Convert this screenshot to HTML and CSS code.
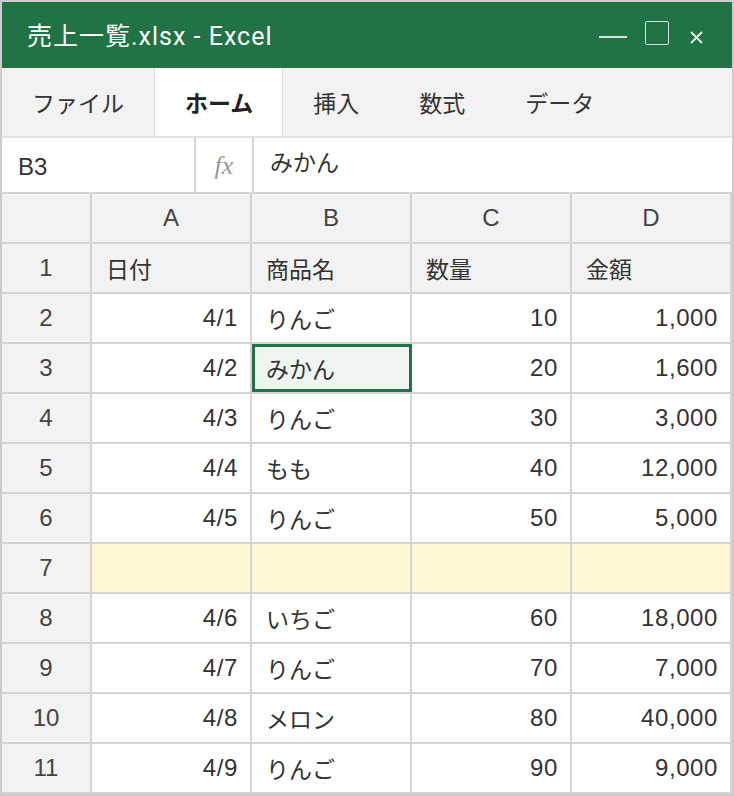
FILE: index.html
```html
<!DOCTYPE html>
<html lang="ja">

<head>
    <meta charset="UTF-8">
    <meta name="viewport" content="width=device-width, initial-scale=1.0">
    <title>売上一覧.xlsx - Excel</title>
    <link rel="stylesheet" href="styles.css">
</head>

<body>
    <div class="window">
        <div class="titlebar">
            <span class="title">売上一覧.xlsx - Excel</span>
            <div class="controls">
                <span class="ctl-min"></span>
                <span class="ctl-max"></span>
                <svg class="ctl-close" width="13" height="13" viewBox="0 0 13 13">
                    <path d="M1 1 L12 12 M12 1 L1 12" stroke="#e6ece8" stroke-width="1.8" fill="none" />
                </svg>
            </div>
        </div>

        <div class="tabs">
            <div class="tab">ファイル</div>
            <div class="tab active">ホーム</div>
            <div class="tab">挿入</div>
            <div class="tab">数式</div>
            <div class="tab">データ</div>
        </div>

        <div class="formula-bar">
            <div class="name-box">B3</div>
            <div class="fx">fx</div>
            <div class="formula">みかん</div>
        </div>

        <div class="sheet">
            <div class="hd corner"></div>
            <div class="hd col">A</div>
            <div class="hd col">B</div>
            <div class="hd col">C</div>
            <div class="hd col">D</div>

            <div class="hd row">1</div>
            <div class="cell label">日付</div>
            <div class="cell label">商品名</div>
            <div class="cell label">数量</div>
            <div class="cell label">金額</div>

            <div class="hd row">2</div>
            <div class="cell num">4/1</div>
            <div class="cell">りんご</div>
            <div class="cell num">10</div>
            <div class="cell num">1,000</div>

            <div class="hd row">3</div>
            <div class="cell num">4/2</div>
            <div class="cell selected">みかん</div>
            <div class="cell num">20</div>
            <div class="cell num">1,600</div>

            <div class="hd row">4</div>
            <div class="cell num">4/3</div>
            <div class="cell">りんご</div>
            <div class="cell num">30</div>
            <div class="cell num">3,000</div>

            <div class="hd row">5</div>
            <div class="cell num">4/4</div>
            <div class="cell">もも</div>
            <div class="cell num">40</div>
            <div class="cell num">12,000</div>

            <div class="hd row">6</div>
            <div class="cell num">4/5</div>
            <div class="cell">りんご</div>
            <div class="cell num">50</div>
            <div class="cell num">5,000</div>

            <div class="hd row">7</div>
            <div class="cell empty"></div>
            <div class="cell empty"></div>
            <div class="cell empty"></div>
            <div class="cell empty"></div>

            <div class="hd row">8</div>
            <div class="cell num">4/6</div>
            <div class="cell">いちご</div>
            <div class="cell num">60</div>
            <div class="cell num">18,000</div>

            <div class="hd row">9</div>
            <div class="cell num">4/7</div>
            <div class="cell">りんご</div>
            <div class="cell num">70</div>
            <div class="cell num">7,000</div>

            <div class="hd row">10</div>
            <div class="cell num">4/8</div>
            <div class="cell">メロン</div>
            <div class="cell num">80</div>
            <div class="cell num">40,000</div>

            <div class="hd row">11</div>
            <div class="cell num">4/9</div>
            <div class="cell">りんご</div>
            <div class="cell num">90</div>
            <div class="cell num">9,000</div>
        </div>
    </div>
</body>

</html>
```

FILE: styles.css
```css
* {
    box-sizing: border-box;
}

body {
    margin: 0;
    padding: 0;
    font-family: "Liberation Sans", "Noto Sans CJK JP", sans-serif;
    color: #333;
}

.window {
    width: 734px;
    height: 796px;
    border: 2px solid #cccccc;
    background-color: #f2f2f2;
    display: flex;
    flex-direction: column;
}

.titlebar {
    height: 66px;
    flex-shrink: 0;
    background-color: #217346;
    color: #fff;
    display: flex;
    align-items: center;
    justify-content: space-between;
    padding: 0 29px 0 25px;
}

.title {
    font-size: 25px;
    font-family: "Roboto", "Noto Sans CJK JP", sans-serif;
    letter-spacing: 1px;
    padding-bottom: 2px;
}

.controls {
    display: flex;
    align-items: center;
    gap: 18px;
}

.ctl-min {
    width: 28px;
    height: 2px;
    background-color: #d8e2dc;
    margin-top: 4px;
}

.ctl-max {
    width: 24px;
    height: 24px;
    border: 1.5px solid #d8e2dc;
    border-radius: 2px;
    margin-top: -4px;
}

.ctl-close {
    margin-left: 3px;
    margin-top: 4px;
}

.tabs {
    height: 68px;
    flex-shrink: 0;
    display: flex;
    background-color: #f2f2f2;
}

.tab {
    padding: 0 30px;
    font-size: 23px;
    font-family: "Noto Sans CJK JP", sans-serif;
    display: flex;
    align-items: center;
    color: #333;
}

.tab.active {
    background-color: #fff;
    font-weight: bold;
    color: #222;
    border-left: 1px solid #dcdcdc;
    border-right: 1px solid #dcdcdc;
    padding: 0 29px 0 30px;
}

.formula-bar {
    height: 56px;
    flex-shrink: 0;
    display: flex;
    background-color: #fff;
    border-top: 2px solid #e2e2e2;
}

.name-box {
    width: 194px;
    border-right: 2px solid #d6d6d6;
    font-size: 24px;
    padding: 4px 16px 0;
    display: flex;
    align-items: center;
}

.fx {
    width: 58px;
    border-right: 2px solid #d6d6d6;
    font-family: "Liberation Serif", serif;
    font-style: italic;
    font-size: 26px;
    color: #999;
    display: flex;
    align-items: center;
    justify-content: center;
    padding-top: 2px;
}

.formula {
    flex: 1;
    font-size: 23px;
    font-family: "Noto Sans CJK JP", sans-serif;
    padding: 0 16px 8px;
    display: flex;
    align-items: center;
}

.sheet {
    display: grid;
    grid-template-columns: 88px 158px 158px 158px 158px;
    grid-auto-rows: 48px;
    gap: 2px;
    padding: 2px 2px 2px 0;
    background-color: #d4d4d4;
    flex: 1;
}

.hd {
    background-color: #f2f2f2;
    font-size: 24px;
    display: flex;
    align-items: center;
    justify-content: center;
    color: #444;
}

.cell {
    background-color: #fff;
    font-size: 23px;
    font-family: "Noto Sans CJK JP", sans-serif;
    display: flex;
    align-items: center;
    padding: 0 14px;
}

.cell.label {
    background-color: #f2f2f2;
}

.cell.num {
    font-family: "Liberation Sans", sans-serif;
    font-size: 24px;
    letter-spacing: 0.6px;
    justify-content: flex-end;
    padding-right: 12px;
}

.cell.empty {
    background-color: #fff7d6;
}

.cell.selected {
    background-color: #eef4ef;
    box-shadow: inset 0 0 0 3px #217346;
    margin-right: -2px;
}
```
